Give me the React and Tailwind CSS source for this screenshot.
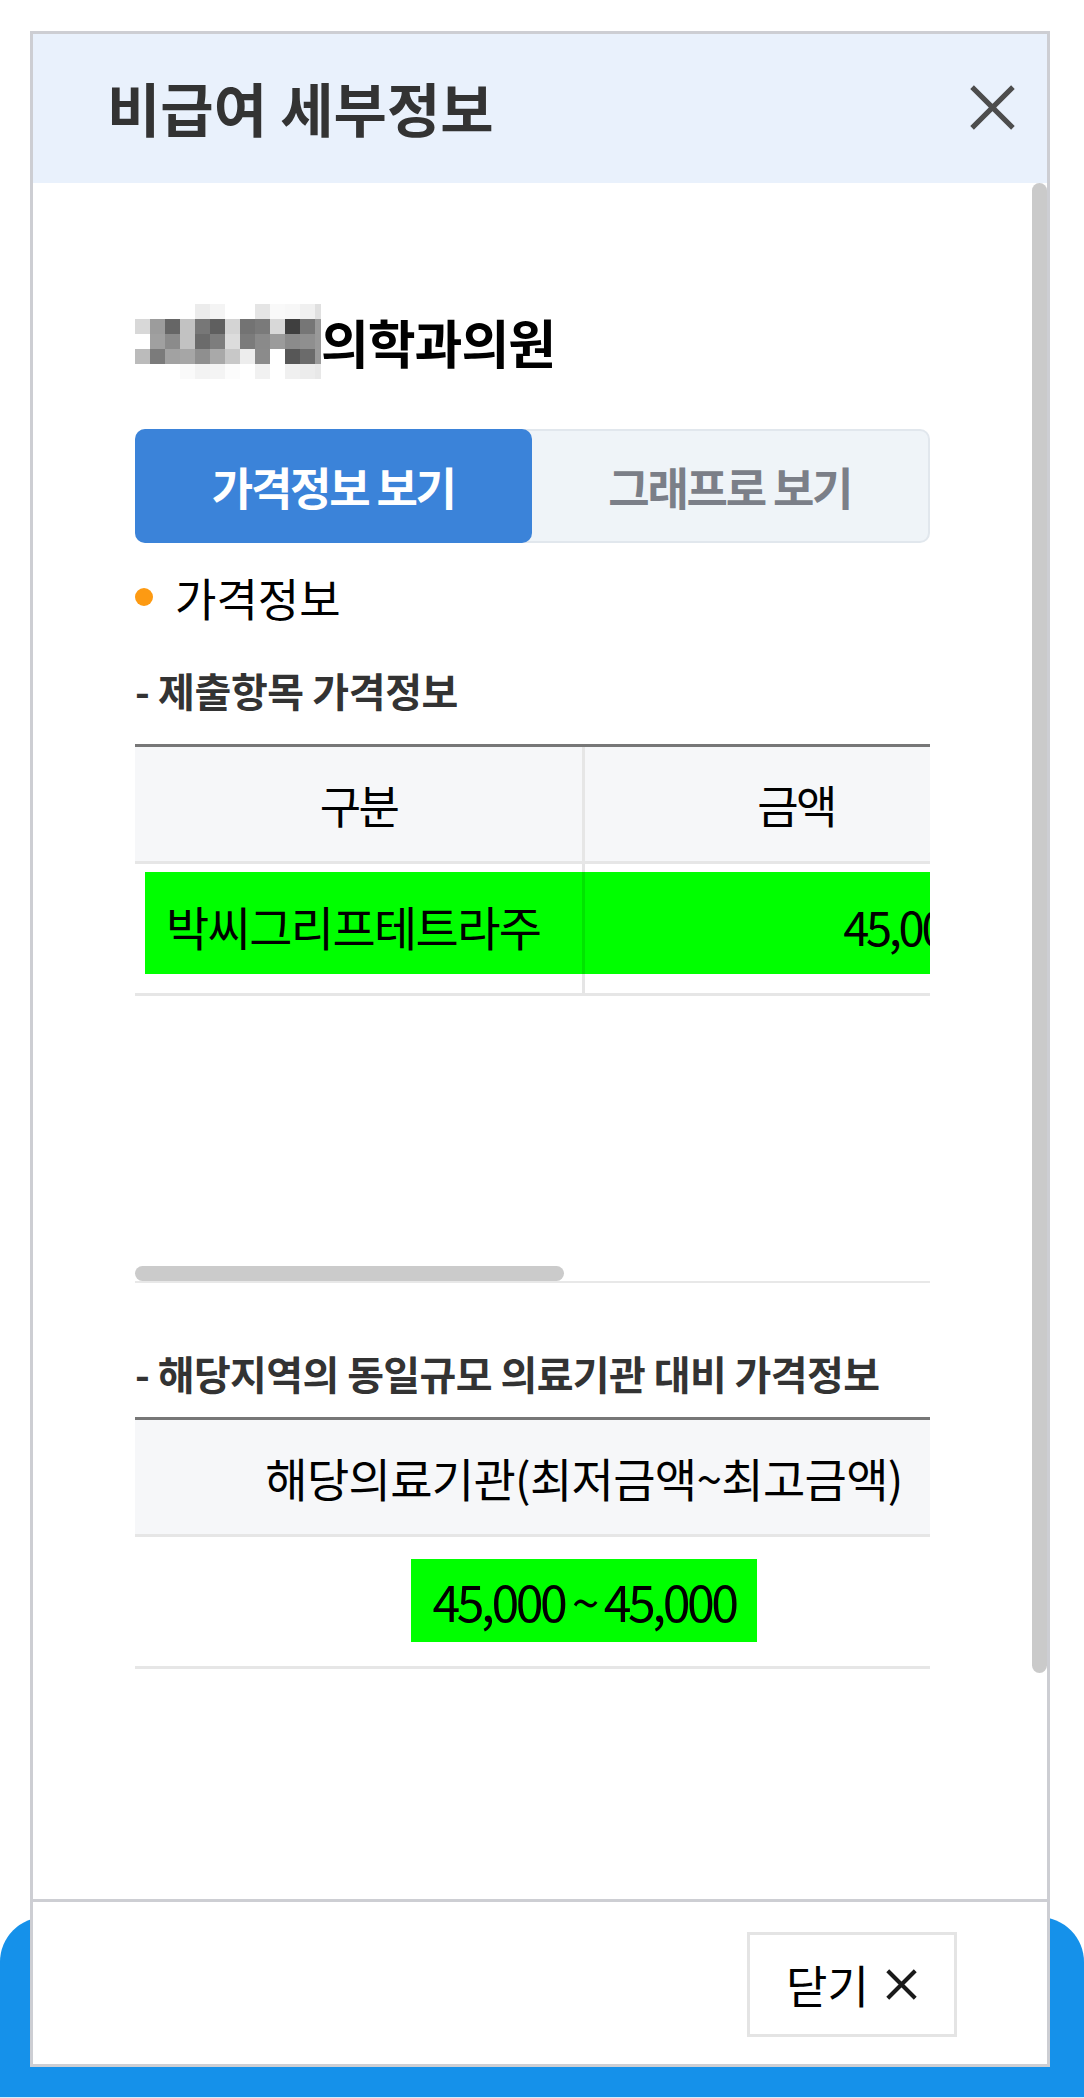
import React from 'react';

const mosaic = [
  ['#fff', '#fff', '#fff', '#fff', '#ececec', '#f4f4f4', '#fff', '#fff', '#e5e5e5', '#f9f9f9', '#f7f7f7', '#f0f0f0', '#e0e0e0'],
  ['#d8d8d8', '#9c9c9c', '#666', '#c2c2c2', '#777', '#5f5f5f', '#d4d4d4', '#737373', '#7a7a7a', '#d8d8d8', '#3f3f3f', '#767676', '#999'],
  ['#fff', '#a0a0a0', '#8b8b8b', '#c2c2c2', '#6b6b6b', '#7d7d7d', '#dcdcdc', '#7b7b7b', '#8a8a8a', '#9b9b9b', '#8b8b8b', '#8f8f8f', '#999'],
  ['#bbb', '#7b7b7b', '#a2a2a2', '#a6a6a6', '#8f8f8f', '#a9a9a9', '#c8c8c8', '#ededed', '#8b8b8b', '#fff', '#575757', '#6b6b6b', '#9a9a9a'],
  ['#fff', '#fff', '#fff', '#fafafa', '#f3f3f3', '#f4f4f4', '#fcfcfc', '#fff', '#f1f1f1', '#fff', '#f0f0f0', '#ececec', '#e8e8e8'],
];

// blurred hospital name (mosaic)
function Mosaic() {
  return (
    <svg width="186" height="75" viewBox="0 0 186 75" className="shrink-0">
      {mosaic.map((row, r) =>
        row.map((c, i) => (
          <rect key={`${r}-${i}`} x={i * 15} y={r * 15} width={i === 12 ? 6 : 15} height="15" fill={c} />
        ))
      )}
    </svg>
  );
}

function CloseIcon({ size, stroke, color }) {
  return (
    <svg width={size} height={size} viewBox="0 0 48 48">
      <path d="M4 4 L44 44 M44 4 L4 44" stroke={color} strokeWidth={stroke} strokeLinecap="butt" />
    </svg>
  );
}

export default function App() {
  return (
    <div className="relative flex h-[2098px] w-[1084px] flex-col overflow-hidden bg-white font-['Noto_Sans_CJK_KR','Noto_Sans',sans-serif]">
      {/* page behind the modal */}
      <div className="mt-auto h-[180px] rounded-t-[45px] bg-[#1591ea]" />
      <div className="h-[1px] bg-[#d4ecf9]" />

      {/* modal */}
      <div className="absolute left-[30px] top-[31px] flex h-[2036px] w-[1020px] flex-col border-[3px] border-[#cdced3] bg-white">
        <div className="flex h-[149px] shrink-0 items-center justify-between bg-[#e9f1fc] pb-[3px] pl-[74px] pr-[30px]">
          <h1 className="text-[58px] font-bold leading-none tracking-[0em] text-[#333]">비급여 세부정보</h1>
          <CloseIcon size={49} stroke={5} color="#4d4d4d" />
        </div>

        <div className="relative flex-1 overflow-hidden pl-[102px] pr-[117px] pt-[121px]">
          <div className="absolute right-0 top-0 h-[1490px] w-[15px] rounded-full bg-[#cacaca]" />

          <div className="flex h-[75px] items-center">
            <Mosaic />
            <span className="text-[52px] font-bold leading-none tracking-[-0.02em] text-black">의학과의원</span>
          </div>

          <div className="mt-[50px] flex h-[114px] rounded-[10px] border-2 border-[#e1e7ed] bg-[#eff4f8]">
            <button className="-my-[2px] -ml-[2px] flex flex-1 items-center justify-center rounded-[10px] bg-[#3b83d9] text-[45px] font-bold leading-none tracking-[-0.05em] text-white">
              가격정보 보기
            </button>
            <button className="flex flex-1 items-center justify-center text-[45px] font-bold leading-none tracking-[-0.05em] text-[#7b7f88]">
              그래프로 보기
            </button>
          </div>

          <div className="mt-[24px] flex h-[60px] items-center">
            <span className="h-[18px] w-[18px] rounded-full bg-[#fd9a12]" />
            <span className="ml-[22px] text-[45px] leading-none text-black">가격정보</span>
          </div>

          <div className="mt-[38px] flex h-[50px] items-center text-[40px] font-bold leading-none tracking-[-0.01em] text-[#333]">
            - 제출항목 가격정보
          </div>

          <div className="mt-[29px] h-[522px] overflow-hidden">
            <div className="w-[1472px] border-t-[3px] border-[#777]">
              <div className="flex h-[117px] border-b-[3px] border-[#e6e6e6] bg-[#f6f7f9] text-[45px] leading-none tracking-[-0.06em] text-black">
                <div className="flex w-[447px] items-center justify-center">구분</div>
                <div className="w-[3px] bg-[#e6e6e6]" />
                <div className="flex w-[422px] items-center justify-center">금액</div>
                <div className="w-[3px] bg-[#e6e6e6]" />
                <div className="flex-1" />
              </div>
              <div className="relative h-[132px] border-b-[3px] border-[#e6e6e6]">
                <div className="absolute bottom-[19px] left-[10px] right-0 top-[8px] bg-[#00ff00]" />
                <div className="relative flex h-full text-[47px] leading-none tracking-[-0.035em] text-black">
                  <div className="flex w-[447px] items-center pb-[6px] pl-[31px]">박씨그리프테트라주</div>
                  <div className="w-[3px] bg-black/10" />
                  <div className="flex w-[422px] items-center justify-end pb-[6px] pr-[40px] tracking-[-0.07em]">45,000</div>
                  <div className="w-[3px] bg-black/10" />
                  <div className="flex-1" />
                </div>
              </div>
            </div>
          </div>
          <div className="h-[15px] w-[429px] rounded-full bg-[#cbcbcb]" />
          <div className="h-[2px] bg-[#e8e8e8]" />

          <div className="mt-[65px] flex h-[50px] items-center text-[40px] font-bold leading-none tracking-[-0.015em] text-[#333]">
            - 해당지역의 동일규모 의료기관 대비 가격정보
          </div>

          <div className="mt-[19px] overflow-hidden">
            <div className="w-[898px] border-t-[3px] border-[#777]">
              <div className="flex h-[117px] items-center justify-center border-b-[3px] border-[#e6e6e6] bg-[#f6f7f9] text-[46px] leading-none tracking-[-0.015em] text-black">
                해당의료기관(최저금액~최고금액)
              </div>
              <div className="flex h-[132px] items-center justify-center border-b-[3px] border-[#e6e6e6] pb-[3px]">
                <span className="flex h-[83px] items-center bg-[#00ff00] px-[22px] text-[50px] leading-none tracking-[-0.07em] text-black">
                  45,000 ~ 45,000
                </span>
              </div>
            </div>
          </div>
        </div>

        <div className="flex h-[165px] shrink-0 justify-end border-t-[3px] border-[#cdced3] pr-[90px] pt-[30px]">
          <button className="flex h-[105px] w-[210px] items-center justify-center gap-[16px] border-[3px] border-[#e4e4e4] bg-white text-[45px] leading-none text-black">
            <span>닫기</span>
            <CloseIcon size={33} stroke={6} color="#1a1a1a" />
          </button>
        </div>
      </div>
    </div>
  );
}
